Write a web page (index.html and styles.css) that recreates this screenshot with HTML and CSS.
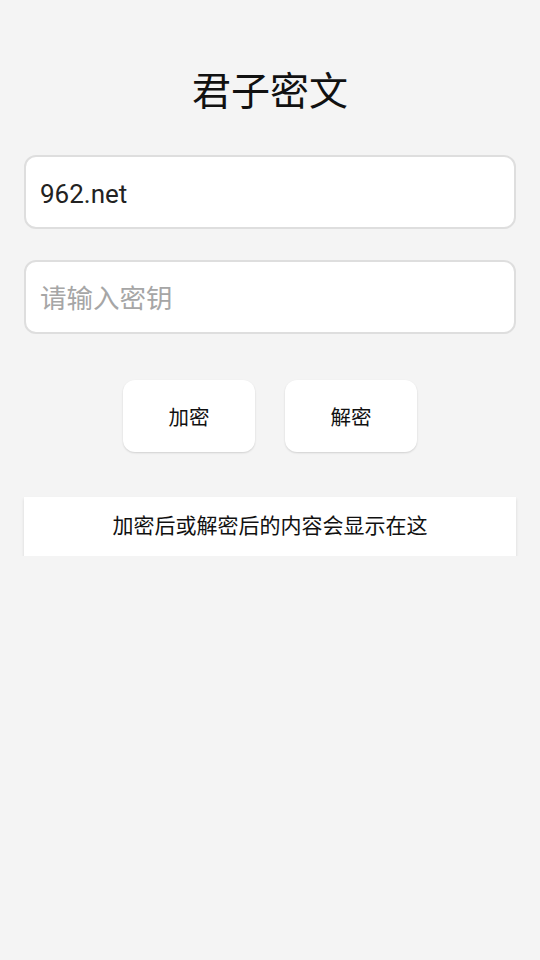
FILE: index.html
```html
<!DOCTYPE html>
<html lang="zh-CN">
<head>
  <meta charset="UTF-8">
  <title>君子密文</title>
  <link rel="stylesheet" href="styles.css">
</head>
<body>

  <h1 class="title">君子密文</h1>

  <div class="form">
    <input class="field" type="text" value="962.net">
    <input class="field" type="text" placeholder="请输入密钥">
  </div>

  <div class="actions">
    <button class="btn">加密</button>
    <button class="btn">解密</button>
  </div>

  <div class="result">加密后或解密后的内容会显示在这</div>

</body>
</html>
```

FILE: styles.css
```css
body {
  font-family: Roboto, 'Noto Sans CJK SC', sans-serif;
  background-color: #f4f4f4;
  margin: 0;
  padding: 0 24px;
}

.title {
  margin: 0;
  padding-top: 66px;
  height: 89px;
  line-height: 52px;
  font-size: 39px;
  font-weight: normal;
  text-align: center;
  color: #111;
}

.form {
  display: flex;
  flex-direction: column;
  gap: 31px;
}

.field {
  box-sizing: border-box;
  width: 100%;
  height: 74px;
  margin: 0;
  padding: 3px 14px 0;
  border: 2px solid #dedede;
  border-radius: 12px;
  background-color: #fff;
  font-family: inherit;
  font-size: 26px;
  color: #222;
  outline: none;
}

.field::placeholder {
  font-size: 26.5px;
  color: #a6a6a6;
}

.actions {
  display: flex;
  justify-content: center;
  gap: 30px;
  margin-top: 46px;
}

.btn {
  width: 132px;
  height: 72px;
  border: none;
  border-radius: 12px;
  background-color: #fff;
  box-shadow: 0 1px 2px rgba(0, 0, 0, 0.15);
  font-family: inherit;
  font-size: 20.5px;
  color: #111;
}

.result {
  margin-top: 45px;
  height: 59px;
  line-height: 59px;
  background-color: #fff;
  box-shadow: 0 2px 3px rgba(0, 0, 0, 0.12);
  text-align: center;
  font-size: 21px;
  color: #111;
}
```
